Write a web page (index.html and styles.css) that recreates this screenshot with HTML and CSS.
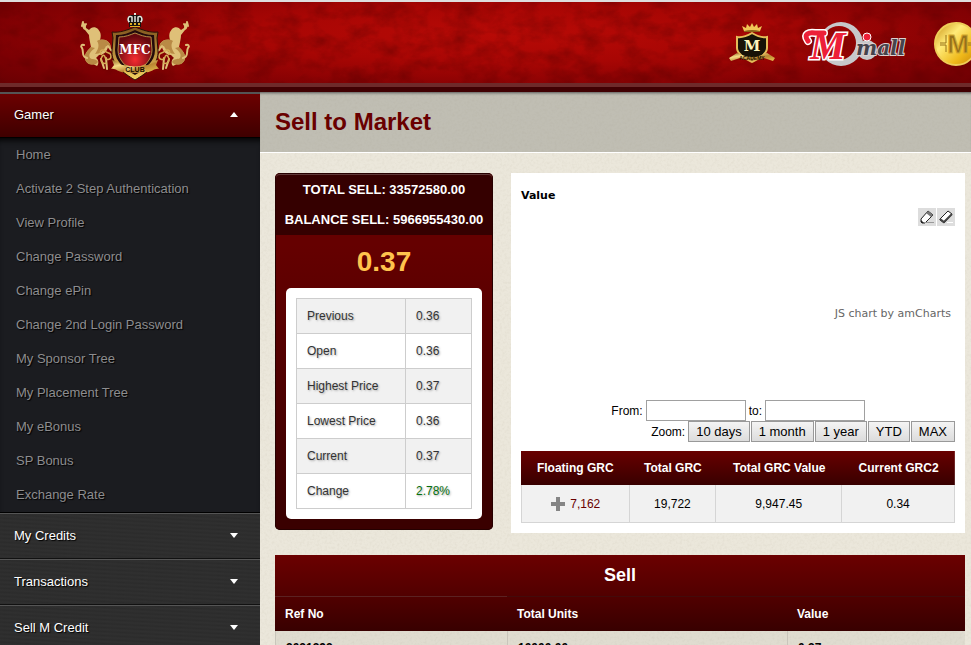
FILE: index.html
```html
<!DOCTYPE html>
<html lang="en">
<head>
<meta charset="utf-8">
<title>Sell to Market</title>
<link rel="stylesheet" href="styles.css">
</head>
<body>
<header class="header">
  <svg class="texture" aria-hidden="true">
    <filter id="leather" x="0" y="0" width="100%" height="100%"><feTurbulence type="fractalNoise" baseFrequency="0.04 0.06" numOctaves="6" seed="4"/><feColorMatrix values="0 0 0 0 0.1  0 0 0 0 0  0 0 0 0 0  0.9 0 0 0 -0.33"/></filter>
    <rect width="100%" height="100%" filter="url(#leather)"/>
  </svg>
  <a class="brand" href="#" aria-label="MFC Club">
    <svg width="120" height="80" viewBox="0 0 120 80">
      <defs>
        <linearGradient id="gold" x1="0" y1="0" x2="1" y2="1"><stop offset="0" stop-color="#8d611e"/><stop offset=".3" stop-color="#f5dc86"/><stop offset=".6" stop-color="#b98532"/><stop offset="1" stop-color="#ecc451"/></linearGradient>
        <linearGradient id="rim" x1="0" y1="0" x2="0" y2="1"><stop offset="0" stop-color="#80551d"/><stop offset=".6" stop-color="#c59a42"/><stop offset="1" stop-color="#f3d260"/></linearGradient>
        <radialGradient id="ruby" cx=".5" cy=".68" r=".6"><stop offset="0" stop-color="#f52c30"/><stop offset="1" stop-color="#65080e"/></radialGradient>
        <g id="lion">
          <path fill="#dfc078" d="M8 14c2 1 3 3 3 6l3 2c2-3 6-4 9-1l2 3c1 2 1 5 0 8 4-1 8 0 10 4l1 5-3-2c-1 5-5 8-9 8l-3 3c3 2 3 6 1 8l-4-2c-3 1-7-1-8-5-1-5 3-9 6-12-1-5-2-9-2-12l-4-5c-3-1-3-5-2-8z"/>
          <path fill="#b98a45" d="M22 33c5-3 11-1 13 3l1 3-5-1c-2 5-6 8-11 8 3-4 5-9 2-13zM16 39l4 1c-4 3-7 6-5 10 2 2 6 0 8 4l-2 2c-5 2-11 0-11-7 0-4 3-7 6-10z"/>
          <path fill="none" stroke="#dfc078" stroke-width="2" stroke-linecap="round" d="M12 50c-6-1-3-7-5-10-2-2 0-4 2-3M8 14l-1 4M11 16l-2 3M33 38l3 4 3 2M26 51l3 9M31 50l1 11"/>
          <path fill="none" stroke="#d5ad57" stroke-width="1.5" d="M27 47c-4-3 0-7 3-4s6 1 6 5-5 5-6 1-4 0-4 3 3 4 6 3"/>
        </g>
      </defs>
      <use href="#lion"/><use href="#lion" transform="translate(120) scale(-1 1)"/>
      <path fill="url(#rim)" stroke="#291006" d="M37 24c8 1 15-2 23-5 8 3 15 6 23 5l-1 6 1 13c1 13-11 22-23 29-12-7-24-16-23-29l1-13z"/>
      <path fill="#220a0b" d="M41 27c7 0 13-2 19-5 6 3 12 5 19 5l1 15c0 12-10 19-20 25-10-6-20-13-20-25z"/>
      <path fill="url(#ruby)" stroke="#b68c47" d="M44 29c6 0 11-2 16-4 5 2 10 4 16 4l1 13c0 10-8 17-17 22-9-5-17-12-17-22z"/>
      <path fill="#171310" d="M54 15c-3-3-2-7 2-8h8c4 1 5 5 2 8z"/>
      <path fill="none" stroke="#e5e6df" stroke-width="1.5" d="M55 15c-4-4-1-8 2-6v6M65 15c4-4 1-8-2-6v6M60 15V8"/>
      <path fill="#e5e6df" d="M59 5h2v2h-2z"/>
      <path fill="#171310" d="M54 14h12v5H54z"/><path fill="#dfad25" d="M55 15h2v2h-2zM59 15h2v2h-2zM63 15h2v2h-2zM55 18h10v1H55z"/>
      <text class="logo-mfc" x="60" y="46">MFC</text>
      <path fill="url(#gold)" d="M37 52c7 1 7 6 14 5l-2 7c-5 1-8-4-13-3l3-4zM83 52c-7 1-7 6-14 5l2 7c5 1 8-4 13-3l-3-4z"/>
      <path fill="url(#gold)" d="M49 56q11 5 22 0l-2 7q-9 4-18 0z"/>
      <text class="logo-club" x="60" y="64">CLUB</text>
    </svg>
  </a>
  <nav class="partners">
    <a href="#" aria-label="M Academy">
      <svg width="48" height="42" viewBox="0 0 48 42">
        <path fill="#f0c657" d="M16 9l-2-5 4 2 1-4 3 3 2-4 2 4 3-3 1 4 4-2-2 5z"/><path fill="#8c5c17" d="M16 9q8-2 16 0v1H16z"/>
        <path fill="#171207" stroke="#e4bd59" stroke-width="2" d="M9 15c6 1 10-1 15-4 5 3 9 5 15 4v11c0 6-8 10-15 14C17 36 9 32 9 26z"/>
        <text class="logo-m" x="24" y="29">M</text>
        <path fill="url(#gold)" d="M1 36l8-5 5 2q10 4 20 0l5-2 8 5-2 3-9-3q-12 5-24 0l-9 3z"/>
        <text class="logo-academy" x="24" y="38">ACADEMY</text>
      </svg>
    </a>
    <a href="#" aria-label="M mall">
      <svg width="106" height="46" viewBox="0 0 106 46">
        <path fill="#c7c8ca" fill-rule="evenodd" d="M39 0a22 22 0 1 1 0 44 22 22 0 0 1 0-44zm-2 4a17 17 0 1 0 0 34 17 17 0 0 0 0-34z"/>
        <circle cx="65" cy="28" r="10" fill="#c7c8ca"/>
        <path fill="none" stroke="#fff" stroke-width="8" stroke-linecap="round" d="M6 19c-5-7 1-9 7-8h9"/>
        <text class="logo-script" x="8" y="37">M</text>
        <path fill="none" stroke="#ed2038" stroke-width="5" stroke-linecap="round" d="M6 19c-5-7 1-9 7-8h9"/>
        <circle cx="65" cy="15" r="4" fill="#ed2038" stroke="#fff"/>
        <text class="logo-mall" x="54" y="33">mall</text>
      </svg>
    </a>
    <a href="#" aria-label="M coin">
      <svg width="44" height="44" viewBox="0 0 44 44">
        <defs><linearGradient id="coin" x1="0" y1="0" x2="1" y2="1"><stop offset="0" stop-color="#c78c10"/><stop offset=".35" stop-color="#ffeb78"/><stop offset=".7" stop-color="#efb91a"/><stop offset="1" stop-color="#c48106"/></linearGradient></defs>
        <circle cx="22" cy="22" r="21" fill="url(#coin)" stroke="#efce58" stroke-width="2"/>
        <path d="M6 21h6v-8M6 23h6v7M38 21h-6M38 23h-6" fill="none" stroke="#977119"/>
        <text class="logo-coin" x="24" y="31">M</text>
      </svg>
    </a>
  </nav>
</header>
<div class="shell">
  <nav class="sidebar">
    <button class="group open">Gamer<span class="arrow up"></span></button>
    <ul class="links">
      <li><a href="#">Home</a></li><li><a href="#">Activate 2 Step Authentication</a></li><li><a href="#">View Profile</a></li><li><a href="#">Change Password</a></li><li><a href="#">Change ePin</a></li><li><a href="#">Change 2nd Login Password</a></li><li><a href="#">My Sponsor Tree</a></li><li><a href="#">My Placement Tree</a></li><li><a href="#">My eBonus</a></li><li><a href="#">SP Bonus</a></li><li><a href="#">Exchange Rate</a></li>
    </ul>
    <button class="group">My Credits<span class="arrow"></span></button>
    <button class="group">Transactions<span class="arrow"></span></button>
    <button class="group">Sell M Credit<span class="arrow"></span></button>
  </nav>
  <main class="main">
    <svg class="texture" aria-hidden="true">
      <filter id="paper" x="0" y="0" width="100%" height="100%"><feTurbulence type="fractalNoise" baseFrequency="0.4" numOctaves="3"/><feColorMatrix values="0 0 0 0 0.4  0 0 0 0 0.35  0 0 0 0 0.25  0.22 0 0 0 -0.09"/></filter>
      <rect width="100%" height="100%" filter="url(#paper)"/>
    </svg>
    <h1 class="title">Sell to Market</h1>
    <div class="content">
      <div class="overview">
        <section class="price-card">
          <div class="totals"><p>TOTAL SELL: 33572580.00</p><p>BALANCE SELL: 5966955430.00</p></div>
          <p class="price">0.37</p>
          <div class="price-box">
            <table class="prices">
              <tr><th scope="row">Previous</th><td>0.36</td></tr>
              <tr><th scope="row">Open</th><td>0.36</td></tr>
              <tr><th scope="row">Highest Price</th><td>0.37</td></tr>
              <tr><th scope="row">Lowest Price</th><td>0.36</td></tr>
              <tr><th scope="row">Current</th><td>0.37</td></tr>
              <tr><th scope="row">Change</th><td class="gain">2.78%</td></tr>
            </table>
          </div>
        </section>
        <section class="panel">
          <h2 class="chart-title">Value</h2>
          <div class="tools">
            <button aria-label="Draw"><svg width="18" height="18" viewBox="0 0 18 18"><path d="M3 14v-3l7-8 5 4-8 8H4z" fill="#fff" stroke="#222"/><path d="M10 3l5 4-2 2-5-4z" fill="#777"/><path d="M3 12v3h3z" fill="#222"/><path d="M7 14.500h9" stroke="#999"/></svg></button>
            <button aria-label="Erase"><svg width="18" height="18" viewBox="0 0 18 18"><path d="M3 11l8-8 4 3-8 9-4-3z" fill="#fff" stroke="#222"/><path d="M3 11l4 3 8-8" fill="none" stroke="#444" stroke-width="2"/><path d="M10 14.500h6" stroke="#fff"/></svg></button>
          </div>
          <div class="chart"><a href="#">JS chart by amCharts</a></div>
          <div class="period"><label for="from">From:</label><input id="from" type="text"><label for="to">to:</label><input id="to" type="text"></div>
          <div class="zoom"><span>Zoom:</span><button>10 days</button><button>1 month</button><button>1 year</button><button>YTD</button><button>MAX</button></div>
          <table class="grc">
            <colgroup><col class="c1"><col class="c2"><col class="c3"><col class="c4"></colgroup>
            <thead><tr><th>Floating GRC</th><th>Total GRC</th><th>Total GRC Value</th><th>Current GRC2</th></tr></thead>
            <tbody><tr><td><a href="#"><svg width="16" height="16" viewBox="0 0 16 16"><path d="M6 1h4v5h5v4h-5v5H6v-5H1V6h5z" fill="#858585"/></svg>7,162</a></td><td>19,722</td><td>9,947.45</td><td>0.34</td></tr></tbody>
          </table>
        </section>
      </div>
      <table class="sell">
        <caption>Sell</caption>
        <colgroup><col class="s1"><col class="s2"><col class="s3"></colgroup>
        <thead><tr><th>Ref No</th><th>Total Units</th><th>Value</th></tr></thead>
        <tbody><tr><td>2021392</td><td>10000.00</td><td>0.37</td></tr></tbody>
      </table>
    </div>
  </main>
</div>
</body>
</html>
```
FILE: styles.css
```css
*, *::after { box-sizing: border-box; }
body { margin: 0; height: 100vh; overflow: hidden; display: flex; flex-direction: column; font: 12px/18px "Liberation Sans", Arial, sans-serif; color: #000; background: #ebe7db; }
h1, h2, p, ul { margin: 0; padding: 0; }
a { color: inherit; text-decoration: none; }
button { font-family: inherit; margin: 0; }
table { border-collapse: collapse; }
svg { display: block; flex: none; }
.texture { position: absolute; inset: 0; width: 100%; height: 100%; z-index: -1; }

.header { position: relative; z-index: 2; flex: none; height: 92px; overflow: hidden; display: flex; justify-content: space-between; padding: 8px 0 0 75px; border-top: 2px solid #dedede; background: radial-gradient(ellipse at 52% 35%, #b80a06 0, #a80604 35%, #7c0003 75%, #620002 100%); }
.header::after { content: ""; position: absolute; left: 0; right: 0; bottom: 0; height: 9px; background: #400002; border-top: 4px solid #6e2a2a; }
.brand { margin-top: -2px; }
.partners { display: flex; flex: none; gap: 26px; margin: 12px -7px 0 0; }
.partners svg { overflow: visible; }
.logo-mfc, .logo-club, .logo-m, .logo-academy, .logo-coin { text-anchor: middle; font-weight: bold; }
.logo-mfc { font-family: "DejaVu Serif", serif; font-size: 12px; fill: #fff; }
.logo-club { font-size: 7px; fill: #160b00; }
.logo-m { font-family: "DejaVu Serif", serif; font-size: 15px; fill: #fff5bd; }
.logo-academy { font-size: 5px; fill: #181000; }
.logo-coin { font-size: 26px; fill: #95701b; stroke: #d3a92d; stroke-width: 1px; }
.logo-script { font: italic bold 40px "Liberation Serif", serif; fill: #ed2038; stroke: #fff; stroke-width: 3px; paint-order: stroke; }
.logo-mall { font: italic bold 20px "DejaVu Serif", serif; fill: #45434c; stroke: #ddd0d0; stroke-width: 2px; paint-order: stroke; }

.shell { display: flex; flex: 1; min-height: 0; }
.sidebar { flex: none; width: 260px; background: #1b1c20; border-top: 2px solid #545454; }
.group { display: flex; align-items: center; justify-content: space-between; width: 100%; height: 46px; padding: 0 22px 2px 14px; border: 0; border-top: 1px solid #555; border-bottom: 1px solid #111; background: repeating-linear-gradient(3deg, #2c2c2c 0, #303030 2px, #2b2b2b 4px); color: #fff; font-size: 13px; text-shadow: 1px 1px 1px #000; }
.group.open { height: 44px; border-top: 0; border-bottom-color: #000; background: linear-gradient(#6c0000, #3e0000); }
.arrow { border: 4px solid transparent; border-top: 5px solid #fff; border-bottom: 0; }
.arrow.up { border-top: 0; border-bottom: 5px solid #fff; }
.links { list-style: none; border-bottom: 1px solid #000; box-shadow: inset 0 6px 6px -4px #000; }
.links a { display: block; height: 34px; padding: 0 16px; line-height: 34px; font-size: 13px; color: #8d8d8f; text-shadow: 1px 1px 1px #000; }

.main { position: relative; z-index: 0; flex: 1; min-width: 0; overflow: hidden; }
.title { height: 61px; padding: 0 15px; line-height: 60px; font-size: 24px; color: #690000; background: rgba(139, 139, 130, .45); border-bottom: 1px solid #fff; box-shadow: inset 0 3px 3px -2px #555; }
.content { padding: 20px 6px 0 15px; }
.overview { display: flex; gap: 18px; align-items: flex-start; }
.price-card { flex: none; width: 218px; padding: 1px 1px 11px; border-radius: 5px; overflow: hidden; background: linear-gradient(#650000 20%, #3a0000 95%); box-shadow: inset 0 0 0 1px #260000; }
.totals { text-align: center; font-size: 13px; font-weight: bold; line-height: 30px; color: #fff; background: #350000; border-top: 1px solid #603838; border-radius: 4px 4px 0 0; white-space: nowrap; }
.price { line-height: 53px; text-align: center; font-size: 28px; font-weight: bold; color: #ffc34d; }
.price-box { margin: 0 10px; padding: 10px; border-radius: 5px; background: #fff; }
.prices { width: 100%; text-shadow: 1px 1px 2px #aaa; color: #333; }
.prices th, .prices td { height: 35px; padding: 0 10px; border: 1px solid #cdcdcd; text-align: left; font-weight: normal; }
.prices td { width: 66px; }
.prices tr:nth-child(odd) { background: #f1f1f1; }
.prices .gain { color: #08700f; }

.panel { flex: 1; min-width: 0; padding: 14px 10px 10px; background: #fff; }
.chart-title { font: bold 11px/18px "DejaVu Sans", Verdana, sans-serif; }
.tools { display: flex; justify-content: flex-end; gap: 1px; margin-top: 3px; }
.tools button { width: 18px; height: 18px; padding: 0; border: 0; background: #ddd; }
.chart { height: 174px; padding: 79px 4px 0; text-align: right; font: 11px/18px "DejaVu Sans", Verdana, sans-serif; color: #666; }
.period { display: flex; align-items: center; justify-content: flex-end; gap: 3px; padding-right: 90px; }
.period input { width: 100px; height: 21px; padding: 0 2px; border: 1px solid #a0a0a0; background: #fff; }
.zoom { display: flex; align-items: center; justify-content: flex-end; gap: 1px; }
.zoom span { margin-right: 2px; }
.zoom button { height: 21px; padding: 0 7px; border: 1px solid #999; background: linear-gradient(#f4f4f4, #dcdcdc); font-size: 13px; line-height: 18px; color: #000; }
.grc { width: 100%; margin-top: 9px; table-layout: fixed; text-align: center; border-collapse: separate; border-spacing: 0; }
.grc .c1 { width: 25%; } .grc .c2 { width: 20%; } .grc .c3 { width: 29%; } .grc .c4 { width: 26%; }
.grc thead { background: linear-gradient(#680000, #380000); color: #fff; }
.grc th { height: 34px; padding: 0; }
.grc td { height: 38px; padding: 0; background: #f1f1f1; border: 1px solid #d5d5d5; border-width: 0 1px 1px 0; }
.grc td:first-child { border-left-width: 1px; }
.grc td a { display: flex; align-items: center; justify-content: center; gap: 4px; color: #690000; }

.sell { width: 100%; margin-top: 22px; table-layout: fixed; text-align: left; border-collapse: separate; border-spacing: 0; }
.sell .s1 { width: 232px; } .sell .s2 { width: 280px; }
.sell caption { height: 41px; line-height: 40px; font-size: 18px; font-weight: bold; color: #fff; background: linear-gradient(#6b0000, #510000); }
.sell thead { background: linear-gradient(#510000, #380000); color: #fff; }
.sell th { height: 35px; padding: 0 10px; border-top: 1px solid #430b0b; }
.sell th:first-child { border-top-color: #5b2222; }
.sell td { height: 35px; padding: 0 10px; border: 1px solid #c9c5bb; border-width: 0 0 1px 1px; background: rgba(100, 100, 90, .08); font-weight: bold; }
```
